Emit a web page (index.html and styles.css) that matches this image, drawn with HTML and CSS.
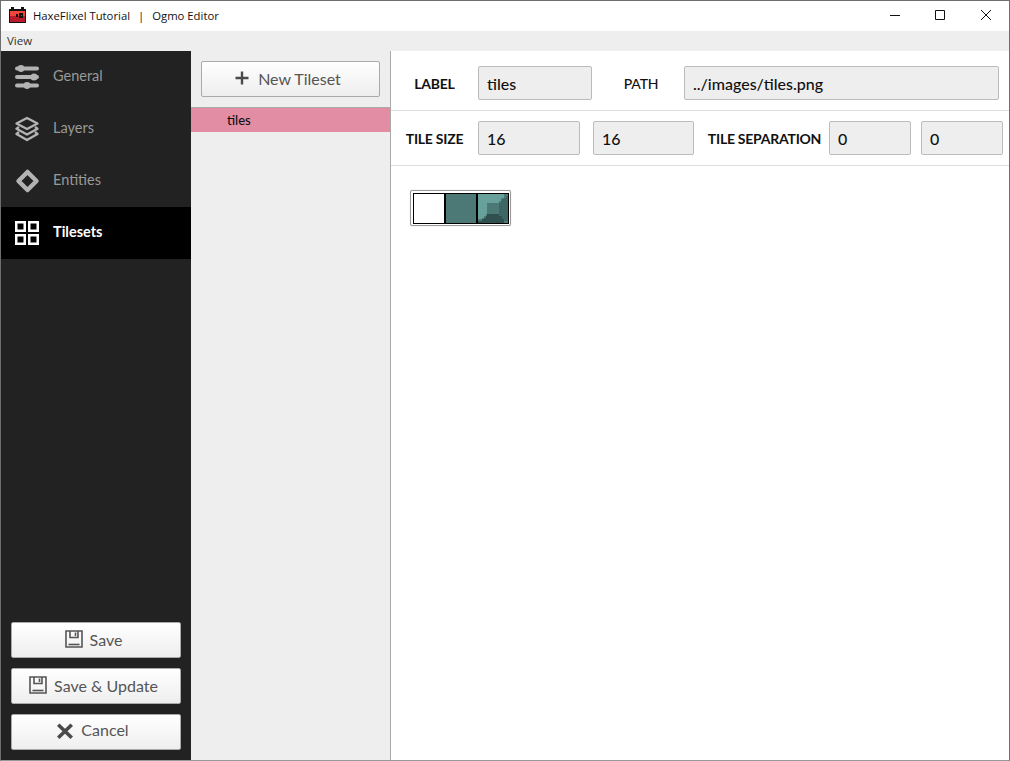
FILE: index.html
```html
<!DOCTYPE html>
<html lang="en">
<head>
  <meta charset="UTF-8">
  <title>HaxeFlixel Tutorial | Ogmo Editor</title>
  <link rel="stylesheet" href="styles.css">
</head>
<body>
  <div class="window">
    <header class="titlebar">
      <svg class="logo" width="17" height="16" viewBox="0 0 17 16" shape-rendering="crispEdges">
        <path fill="#111" d="M0 2h2V0h3v2h7V0h3v2h2v14H0z"/>
        <path fill="#f0453a" d="M1 4h15v5H1z"/>
        <path fill="#b81c2c" d="M1 9h15v6H1z"/>
        <path fill="#111" d="M7 7h2v3H7zM10 6h4v5h-4z"/>
        <path fill="#d92d30" d="M12 8h1v1h-1z"/>
      </svg>
      <span class="title">HaxeFlixel Tutorial</span>
      <span class="title-sep">|</span>
      <span class="title">Ogmo Editor</span>
      <div class="window-btns">
        <svg width="10" height="10" viewBox="0 0 10 10"><path d="M0 5.500h10" stroke="#111" fill="none"/></svg>
        <svg width="10" height="10" viewBox="0 0 10 10"><path d="M0.500 0.500h9v9h-9z" stroke="#111" fill="none"/></svg>
        <svg width="10" height="10" viewBox="0 0 10 10"><path d="M0 0l10 10M10 0L0 10" stroke="#111" fill="none"/></svg>
      </div>
    </header>
    <nav class="menubar">View</nav>

    <div class="content">
      <aside class="sidebar">
        <div class="nav-item">
          <svg class="nav-icon" viewBox="0 0 26 26" fill="#b3b3b3">
            <rect x="1" y="2.5" width="24" height="4" rx="2"/><circle cx="7" cy="4.5" r="3.4"/>
            <rect x="1" y="11" width="24" height="4" rx="2"/><circle cx="20" cy="13" r="3.6"/>
            <rect x="1" y="19.5" width="24" height="4" rx="2"/><circle cx="13" cy="21.5" r="3.4"/>
          </svg>
          <span>General</span>
        </div>
        <div class="nav-item">
          <svg class="nav-icon" viewBox="0 0 26 26" fill="none" stroke="#b3b3b3" stroke-width="2.4" stroke-linejoin="round">
            <path d="M13 2l10.5 5.5L13 13 2.5 7.5z"/>
            <path d="M5 11l-2.500 1.800L13 18.500l10.500-5.700L21 11"/>
            <path d="M5 16l-2.500 2L13 24l10.500-6L21 16"/>
          </svg>
          <span>Layers</span>
        </div>
        <div class="nav-item">
          <svg class="nav-icon" viewBox="0 0 26 26" fill="none" stroke="#b3b3b3" stroke-width="4.500" stroke-linejoin="round">
            <path d="M13.500 4l9 9-9 9-9-9z"/>
          </svg>
          <span>Entities</span>
        </div>
        <div class="nav-item active">
          <svg class="nav-icon" viewBox="0 0 26 26" fill="none" stroke="#fff" stroke-width="2.500">
            <path d="M2.250 2.250h8.500v8.500h-8.500zM15.250 2.250h8.500v8.500h-8.500zM2.250 15.250h8.500v8.500h-8.500zM15.250 15.250h8.500v8.500h-8.500z"/>
          </svg>
          <span>Tilesets</span>
        </div>

        <div class="side-actions">
          <button class="btn">
            <svg class="btn-icon" viewBox="0 0 18 18" fill="none" stroke="#555" stroke-width="1.600"><path d="M1 1h16v16H1z"/><path d="M5 1v6.500h8V1M10.500 2.500v3.500" /><path d="M3.500 14.500h11"/></svg>
            Save
          </button>
          <button class="btn">
            <svg class="btn-icon" viewBox="0 0 18 18" fill="none" stroke="#555" stroke-width="1.600"><path d="M1 1h16v16H1z"/><path d="M5 1v6.500h8V1M10.500 2.500v3.500" /><path d="M3.500 14.500h11"/></svg>
            Save &amp; Update
          </button>
          <button class="btn btn-cancel">
            <svg class="btn-icon" viewBox="0 0 16 16" fill="none" stroke="#4a4a4a" stroke-width="3.200"><path d="M2 2.500l12 11.500M14 2.500L2 14"/></svg>
            Cancel
          </button>
        </div>
      </aside>

      <section class="list-panel">
        <div class="list-top">
          <button class="btn">
            <svg class="btn-icon plus" viewBox="0 0 14 14" fill="none" stroke="#4a4a4a" stroke-width="2.400"><path d="M7 0.500v13M0.500 7h13"/></svg>
            New Tileset
          </button>
        </div>
        <div class="list-item">tiles</div>
      </section>

      <main class="editor">
        <div class="form-row row-one">
          <label class="field-label label-first">LABEL</label>
          <input class="field input-label" type="text" value="tiles">
          <label class="field-label label-path">PATH</label>
          <input class="field input-path" type="text" value="../images/tiles.png">
        </div>
        <div class="form-row row-two">
          <label class="field-label label-first">TILE SIZE</label>
          <input class="field input-size" type="text" value="16">
          <input class="field input-size second" type="text" value="16">
          <label class="field-label label-sep">TILE SEPARATION</label>
          <input class="field input-gap" type="text" value="0">
          <input class="field input-gap second-gap" type="text" value="0">
        </div>
        <div class="tile-preview">
          <div class="tile-strip">
            <div class="tile tile-blank"></div>
            <div class="tile tile-fill"></div>
            <div class="tile">
              <svg width="30" height="29" viewBox="0 0 16 16" preserveAspectRatio="none" shape-rendering="crispEdges">
                <rect width="16" height="16" fill="#4c7876"/>
                <path fill="#68a09c" d="M0 0h14v2h-2v2h-1v1H5v6H4v1H3v1H2v1H0z"/>
                <path fill="#3e6664" d="M16 1v14h-3v-3h-2V5h1V4h1V3h1V2h1V1z"/>
                <path fill="#305050" d="M5 11h6v1h2v2h1v2H0v-1h2v-1h1v-1h1v-1h1z"/>
              </svg>
            </div>
          </div>
        </div>
      </main>
    </div>
  </div>
</body>
</html>
```

FILE: styles.css
```css
* {
  box-sizing: border-box;
}

html, body {
  margin: 0;
  height: 100%;
  overflow: hidden;
}

body {
  font-family: Lato, "Liberation Sans", sans-serif;
  background-color: #fff;
}

.window {
  display: flex;
  flex-direction: column;
  height: 761px;
  border: 1px solid #6e6e6e;
  border-bottom-color: #999;
}

.titlebar {
  display: flex;
  align-items: center;
  height: 30px;
  padding-left: 8px;
  padding-bottom: 2px;
  background-color: #fff;
  font-family: "Open Sans", "Noto Sans", sans-serif;
  font-size: 11.3px;
  color: #111;
}

.logo {
  margin-right: 7px;
}

.title-sep {
  margin: 0 8px;
}

.window-btns {
  display: flex;
  gap: 35px;
  margin-left: auto;
  margin-right: 18px;
}

.window-btns svg:last-child {
  margin-left: 1px;
}

.menubar {
  height: 20px;
  line-height: 20px;
  padding-left: 6px;
  background-color: #eee;
  font-family: "Open Sans", "Noto Sans", sans-serif;
  font-size: 11.5px;
  color: #333;
}

.content {
  display: flex;
  flex: 1;
  min-height: 0;
}

.sidebar {
  display: flex;
  flex-direction: column;
  width: 190px;
  background-color: #222;
}

.nav-item {
  display: flex;
  align-items: center;
  height: 52px;
  padding-left: 13px;
  font-size: 14.5px;
  color: #999;
}

.nav-item span {
  padding-bottom: 4px;
}

.nav-item.active {
  background-color: #000;
  color: #fff;
  font-weight: bold;
}

.nav-icon {
  width: 26px;
  height: 26px;
  margin-right: 13px;
}

.side-actions {
  display: flex;
  flex-direction: column;
  gap: 10px;
  margin-top: auto;
  padding: 0 10px 10px;
}

.btn {
  display: flex;
  align-items: center;
  justify-content: center;
  gap: 7px;
  width: 100%;
  height: 36px;
  padding: 0 5px 2px 0;
  border: 1px solid #aaa;
  border-radius: 2px;
  background: linear-gradient(#fff, #eee);
  font-family: Lato, "Liberation Sans", sans-serif;
  font-size: 16px;
  color: #555;
}

.btn-icon {
  width: 18px;
  height: 18px;
}

.btn-icon.plus {
  width: 14px;
  height: 14px;
  margin-right: 2px;
}

.btn-cancel {
  padding: 0 7px 6px 0;
}

.btn-cancel .btn-icon {
  margin-top: 4px;
}

.list-panel {
  width: 200px;
  background-color: #eee;
  border-right: 1px solid #aaa;
}

.list-top {
  padding: 10px;
}

.list-item {
  height: 25px;
  line-height: 24px;
  padding-left: 36px;
  border-top: 1px solid #aaa;
  background-color: #e38da5;
  font-size: 13px;
  font-weight: 500;
  color: #111;
}

.editor {
  flex: 1;
  min-width: 0;
  background-color: #fff;
}

.form-row {
  display: flex;
  align-items: center;
  border-bottom: 1px solid #ddd;
}

.row-one {
  height: 60px;
  padding-top: 5px;
}

.row-two {
  height: 55px;
}

.field-label {
  font-size: 14px;
  font-weight: bold;
  color: #111;
  text-align: center;
  letter-spacing: -0.25px;
}

.label-first {
  width: 87px;
}

.label-path {
  width: 92px;
  padding-left: 6px;
  font-weight: 500;
}

.label-sep {
  width: 135px;
  padding-left: 6px;
}

.field {
  height: 34px;
  padding: 0 8px;
  border: 1px solid #bbb;
  border-radius: 2px;
  background-color: #eee;
  font-family: Lato, "Liberation Sans", sans-serif;
  font-size: 16px;
  font-weight: 500;
  color: #111;
  outline: none;
}

.input-label {
  width: 114px;
}

.input-path {
  width: 315px;
}

.input-size {
  width: 102px;
}

.input-size.second {
  width: 101px;
  margin-left: 13px;
}

.input-gap {
  width: 82px;
}

.input-gap.second-gap {
  margin-left: 10px;
}

.tile-preview {
  padding: 24px 19px;
}

.tile-strip {
  display: inline-flex;
  padding: 2px 1px 1px 2px;
  border: 1px solid #999;
  border-radius: 2px;
  background-color: #fff;
  box-shadow: 0 0 1px #bbb;
}

.tile {
  width: 32px;
  height: 31px;
  border: 1px solid #000;
}

.tile-blank {
  background-color: #fff;
}

.tile-fill {
  background-color: #4c7876;
}

.tile svg {
  display: block;
}
```
